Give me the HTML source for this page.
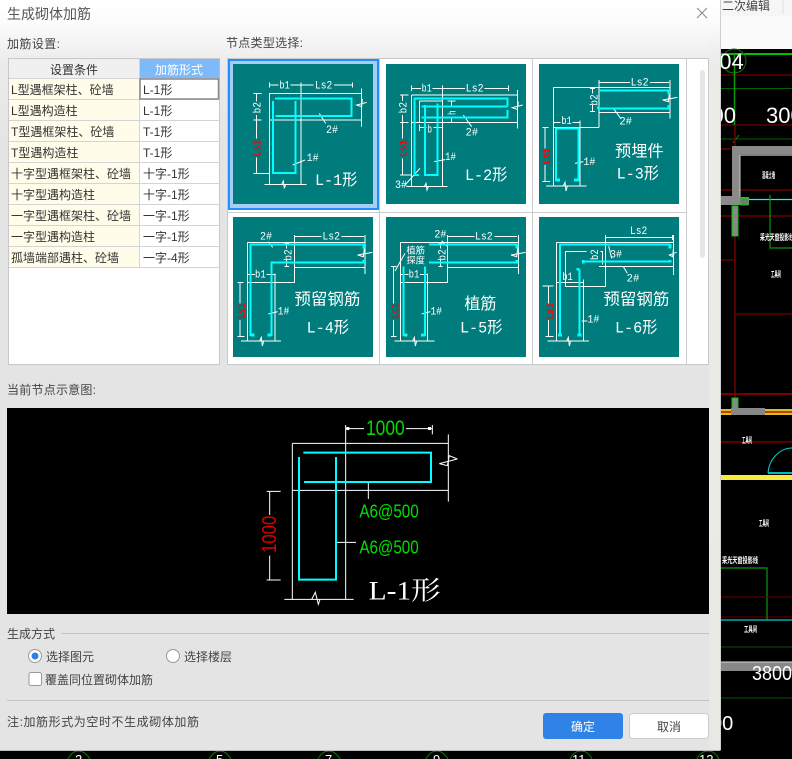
<!DOCTYPE html>
<html><head><meta charset="utf-8"><style>
html,body{margin:0;padding:0;background:#000;width:792px;height:759px;overflow:hidden}
svg{display:block}
text{font-family:"Liberation Sans","Noto Sans CJK SC",sans-serif}
.u{font-size:12px;fill:#444}
.t{font-size:12px;fill:#333}
.w{stroke:#fff;stroke-width:3;fill:none}
.c{stroke:#0ff;stroke-width:6;fill:none}
.l{font-size:33px;fill:#fff;font-family:"Liberation Mono","Noto Sans CJK SC",monospace}
.r{font-size:33px;fill:#f00;font-weight:bold;font-family:"Liberation Mono",monospace}
.b{font-size:48px;fill:#fff;font-family:"Liberation Mono","Noto Sans CJK SC",monospace}
.z{fill:#fff;font-family:"Liberation Serif","Noto Serif CJK SC",serif}
.cad{font-size:22px;fill:#fff}
.s{font-size:8px;fill:#fff;font-weight:bold}
</style></head><body>
<svg width="792" height="759" viewBox="0 0 792 759" xmlns="http://www.w3.org/2000/svg">
<defs>
<linearGradient id="dg" x1="0" y1="0" x2="0" y2="1"><stop offset="0" stop-color="#fff"/><stop offset=".03" stop-color="#fcfcfc"/><stop offset=".085" stop-color="#ebebeb"/><stop offset=".2" stop-color="#e4e4e4"/><stop offset="1" stop-color="#e3e4e3"/></linearGradient>
<linearGradient id="sg" x1="0" y1="0" x2="0" y2="1"><stop offset="0" stop-color="#ecece8" stop-opacity="0"/><stop offset=".1" stop-color="#ecece8"/><stop offset="1" stop-color="#e8e8e4"/></linearGradient>
</defs>
<rect width="792" height="759" fill="#000"/>
<!-- top app region -->
<rect x="720" y="0" width="72" height="49" fill="#fbfbfb"/>
<rect x="720" y="0" width="72" height="16" fill="#f6f6f6"/>
<text x="722" y="10" font-size="12" fill="#444">二次编辑</text>
<line x1="783" y1="0" x2="783" y2="14" stroke="#ddd"/>
<!-- CAD -->
<g fill="none">
<path d="M721 54H792" stroke="#0f0" stroke-width="1.4"/>
<path d="M721 75H792M721 125H792" stroke="#8b0000"/>
<path d="M721 88.500H792M721 139H792" stroke="#006400"/>
<circle cx="734" cy="61" r="12" stroke="#0a7a0a"/>
<path d="M734.500 54V125" stroke="#0a9a0a" stroke-width="1.500"/>
<path d="M733 143L739 135" stroke="#0a8a0a"/>
<path d="M735 125V146M735 205V400" stroke="#700000" stroke-width="1.500"/>
<path d="M721 149H731M721 190H792M721 216H792" stroke="#a00000"/>
<path d="M721 260H735M735 314H792" stroke="#8b0000"/>
<path d="M721 394H792" stroke="#a00000" stroke-width="1.500"/>
<path d="M740 199.500H792" stroke="#0ff" stroke-width="1.200"/>
<path d="M770 195V248H792" stroke="#0a9a0a" stroke-width="1.200"/>
<path d="M721 442H792" stroke="#b00000"/>
<path d="M768 473C769 459 780 448 792 448" stroke="#0cc"/>
<path d="M768 473H792" stroke="#0bb" stroke-width="2"/>
<path d="M721 568H767V620" stroke="#0a9a0a" stroke-width="1.200"/>
<path d="M721 597H792M721 617H792" stroke="#6b0000"/>
<path d="M721 620H792" stroke="#0ff"/>
<path d="M767 600V620" stroke="#0a9a0a"/>
<path d="M721 647H792M721 698H792" stroke="#085008"/>
</g>
<path d="M732 146H792V154H740V197H749V205H721V196H732Z" fill="#8a8a8a"/>
<path d="M740 155H792" stroke="#fff"/><path d="M740 197V155" stroke="#ccc"/>
<rect x="741" y="198" width="7" height="7" fill="#777" stroke="#0c0"/>
<rect x="732" y="206" width="6" height="30" fill="#888" stroke="#0c0"/>
<rect x="732" y="398" width="6" height="12" fill="#888" stroke="#0c0"/>
<rect x="721" y="409" width="71" height="6" fill="#d9c020"/><rect x="721" y="411" width="71" height="2" fill="#c04000"/>
<rect x="731" y="408" width="34" height="7" fill="#888"/>
<rect x="721" y="475" width="71" height="5" fill="#f5ea40"/>
<rect x="721" y="662" width="71" height="9" fill="#888"/>
<path d="M721 662H792" stroke="#ddd"/>
<text x="707" y="69" class="cad">004</text>
<text x="711.500" y="123" class="cad">00</text>
<text x="766" y="123" class="cad">300</text>
<text x="752" y="680" style="font-size:20px" class="cad" textLength="40" lengthAdjust="spacingAndGlyphs">3800</text>
<text x="711" y="730" style="font-size:20px" class="cad">00</text>
<text x="762" y="178" class="s" textLength="13" lengthAdjust="spacingAndGlyphs">混凝土墙</text>
<text x="760" y="240" class="s" textLength="34" lengthAdjust="spacingAndGlyphs">采光天窗投影线</text>
<text x="771" y="277" class="s" textLength="10" lengthAdjust="spacingAndGlyphs">工具间</text>
<text x="742" y="443" class="s" textLength="10" lengthAdjust="spacingAndGlyphs">工具间</text>
<text x="759" y="526" class="s" textLength="10" lengthAdjust="spacingAndGlyphs">工具间</text>
<text x="722" y="563" class="s" textLength="36" lengthAdjust="spacingAndGlyphs">采光天窗投影线</text>
<text x="744" y="632" class="s" textLength="13" lengthAdjust="spacingAndGlyphs">工具间</text>
<!-- bottom numbers -->
<g fill="none" stroke="#0a7a0a"><path d="M68 759Q72 751 78 751Q85 751 90 759M209 759Q214 751 220 751Q226 751 231 759M318 759Q322 751 329 751Q335 751 340 759M426 759Q430 751 437 751Q443 751 448 759M570 759Q574 751 581 751Q588 751 592 759M697 759Q701 751 708 751Q715 751 719 759"/></g>
<g font-size="13" fill="#fff"><text x="75" y="764">2</text><text x="216" y="764">5</text><text x="325" y="764">7</text><text x="433" y="764">9</text><text x="572" y="764">11</text><text x="699" y="764">12</text></g>
<!-- dialog -->
<rect x="0" y="0" width="720.500" height="750.500" fill="url(#dg)"/>
<rect x="709" y="30" width="11.500" height="720" fill="url(#sg)"/>
<path d="M0 750.500H720.500" fill="none" stroke="#bbb"/>
<path d="M720.500 0V750" fill="none" stroke="#d0d0d0"/>
<text x="7" y="19" font-size="14" fill="#555">生成砌体加筋</text>
<path d="M697 8L707 18M707 8L697 18" stroke="#888" fill="none"/>
<text x="7" y="48" class="u" textLength="53">加筋设置:</text>
<text x="226" y="47" class="u" textLength="77">节点类型选择:</text>
<!-- table -->
<rect x="8.500" y="58.500" width="211" height="306" fill="#fff" stroke="#c8c8c8"/>
<rect x="9" y="59" width="130" height="19.500" fill="#f0f0f0"/>
<rect x="139.500" y="59" width="80" height="19.500" fill="#7eb9fb"/>
<rect x="9" y="79" width="130" height="188" fill="#fffde9"/>
<g stroke="#d4d4d4"><path d="M9 78.500H219M9 99.500H219M9 120.500H219M9 141.500H219M9 162.500H219M9 183.500H219M9 204.500H219M9 225.500H219M9 246.500H219M9 267.500H219M139.500 59V267"/></g>
<rect x="140" y="79" width="78.500" height="20" fill="#fff" stroke="#888" stroke-width="1.500"/>
<text x="74" y="74" class="t" text-anchor="middle">设置条件</text>
<text x="179" y="74" font-size="12" fill="#fff" text-anchor="middle">加筋形式</text>
<text x="11" y="94" class="t">L型遇框架柱、砼墙</text><text x="143" y="94" class="t">L-1形</text>
<text x="11" y="115" class="t">L型遇构造柱</text><text x="143" y="115" class="t">L-1形</text>
<text x="11" y="136" class="t">T型遇框架柱、砼墙</text><text x="143" y="136" class="t">T-1形</text>
<text x="11" y="157" class="t">T型遇构造柱</text><text x="143" y="157" class="t">T-1形</text>
<text x="11" y="178" class="t">十字型遇框架柱、砼墙</text><text x="143" y="178" class="t">十字-1形</text>
<text x="11" y="199" class="t">十字型遇构造柱</text><text x="143" y="199" class="t">十字-1形</text>
<text x="11" y="220" class="t">一字型遇框架柱、砼墙</text><text x="143" y="220" class="t">一字-1形</text>
<text x="11" y="241" class="t">一字型遇构造柱</text><text x="143" y="241" class="t">一字-1形</text>
<text x="11" y="262" class="t">孤墙端部遇柱、砼墙</text><text x="143" y="262" class="t">一字-4形</text>
<!-- node panel -->
<rect x="227.500" y="58.500" width="481" height="306" fill="#fff" stroke="#c8c8c8"/>
<path d="M686.500 59V364" stroke="#ccc"/>
<rect x="700" y="70" width="5" height="188" rx="2.500" fill="#e6e6e6"/>
<path d="M379.500 59V364M532.500 59V364M228 212.500H686" stroke="#ccc"/>
<rect x="228" y="59" width="151" height="151" fill="#1e90ff"/>
<rect x="230" y="61" width="147" height="147" fill="#a8cdf5"/>
<rect x="233" y="64" width="140" height="140" fill="#007c7c"/>
<rect x="386" y="64" width="140" height="140" fill="#007c7c"/>
<rect x="539" y="64" width="140" height="140" fill="#007c7c"/>
<rect x="233" y="217" width="140" height="140" fill="#007c7c"/>
<rect x="386" y="217" width="140" height="140" fill="#007c7c"/>
<rect x="539" y="217" width="140" height="140" fill="#007c7c"/>
<!-- tile 1-2 -->
<g transform="translate(225,55) scale(.33333)" shape-rendering="crispEdges">
<path class="w" d="M133 82V98M133 90H160M197 90H266M327 90H383M383 82V98M228 82V98M133 115H410M133 115V388M228 98V388M133 195H410M410 100V215M118 388H245M85 115H110M85 195H110M95 115V140M95 180V250M95 308V355M85 355H133"/>
<path class="w" d="M425 142L395 150L410 155L412 132M170 388L175 378L178 400L182 388M283 175L302 205M203 330L240 315" shape-rendering="auto" stroke-width="2.500"/>
<path class="c" d="M144 138V354H212V138M150 131H379V183H152"/>
<text x="163" y="100" class="l" textLength="31" lengthAdjust="spacingAndGlyphs">b1</text>
<text x="270" y="100" class="l" textLength="52" lengthAdjust="spacingAndGlyphs">Ls2</text>
<text transform="translate(106,175) rotate(-90)" class="l" textLength="34" lengthAdjust="spacingAndGlyphs">b2</text>
<text transform="translate(106,305) rotate(-90)" class="r" textLength="52" lengthAdjust="spacingAndGlyphs">Ls1</text>
<text x="303" y="234" class="l" textLength="36" lengthAdjust="spacingAndGlyphs">2#</text>
<text x="245" y="318" class="l" textLength="36" lengthAdjust="spacingAndGlyphs">1#</text>
<text x="270" y="390" class="b" textLength="127" lengthAdjust="spacingAndGlyphs">L-1形</text>
<path class="w" d="M559 92V108M559 100H588M622 100H720M778 100H850M850 92V108M652 92V108M559 120H878M559 120V395M652 108V395M545 395H668M878 105V220M559 202H878M583 138H652M583 138V202M525 120H550M525 202H550M533 120V138M533 180V250M533 310V360M525 360H559M668 138H692M668 202H692M680 138V158M680 185V202M583 218H605M625 218H652M583 208V228"/>
<path class="w" d="M893 150L862 158L877 163L880 140M598 395L603 385L606 405L610 395M715 180L740 215M628 320L660 314M585 340L540 390" shape-rendering="auto" stroke-width="2.500"/>
<path class="c" d="M568 360V131H848V155"/>
<path class="c" d="M848 165V188H590M590 155H848M600 150V360H638V145"/>
<path d="M568 360H582" stroke="#0ff" stroke-width="5"/>
<text x="590" y="110" class="l" textLength="30" lengthAdjust="spacingAndGlyphs">b1</text>
<text x="722" y="110" class="l" textLength="54" lengthAdjust="spacingAndGlyphs">Ls2</text>
<text transform="translate(544,175) rotate(-90)" class="l" textLength="34" lengthAdjust="spacingAndGlyphs">b2</text>
<text transform="translate(544,306) rotate(-90)" class="r" textLength="52" lengthAdjust="spacingAndGlyphs">Ls1</text>
<text transform="translate(692,180) rotate(-90)" class="l" textLength="14" lengthAdjust="spacingAndGlyphs">h</text>
<text x="607" y="232" class="l" textLength="14" lengthAdjust="spacingAndGlyphs">b</text>
<text x="722" y="242" class="l" textLength="37" lengthAdjust="spacingAndGlyphs">2#</text>
<text x="660" y="315" class="l" textLength="33" lengthAdjust="spacingAndGlyphs">1#</text>
<text x="510" y="399" class="l" textLength="36" lengthAdjust="spacingAndGlyphs">3#</text>
<text x="720" y="375" class="b" textLength="127" lengthAdjust="spacingAndGlyphs">L-2形</text>
</g>
<!-- tile 3 and 6 -->
<g transform="translate(530,55) scale(.33333)" shape-rendering="crispEdges">
<path class="w" d="M207 75V90M207 82H300M360 82H417M420 75V190M70 97H420M70 97V393M70 217H207M207 75V217M207 172H420M150 197V393M180 100H195M180 170H195M188 100V115M188 150V170M70 203H92M128 203H150M38 217H55M45 217V280M45 330V380M38 380H60M48 393H170"/>
<path class="w" d="M442 127L398 135L415 140L418 115M100 393L105 382L108 408L112 393M250 160L272 190M135 325L160 320" shape-rendering="auto" stroke-width="2.500"/>
<path class="c" d="M78 378V220H146V378M207 107H416M207 160H416"/>
<path d="M78 375H90M146 375H132M416 104V118M416 163V150M205 154V162" stroke="#0ff" stroke-width="8" fill="none"/>
<text x="302" y="91" class="l" textLength="54" lengthAdjust="spacingAndGlyphs">Ls2</text>
<text x="94" y="207" class="l" textLength="31" lengthAdjust="spacingAndGlyphs">b1</text>
<text transform="translate(202,152) rotate(-90)" class="l" textLength="34" lengthAdjust="spacingAndGlyphs">b2</text>
<text transform="translate(60,327) rotate(-90)" class="r" textLength="48" lengthAdjust="spacingAndGlyphs">Ls1</text>
<text x="268" y="209" class="l" textLength="38" lengthAdjust="spacingAndGlyphs">2#</text>
<text x="160" y="330" class="l" textLength="36" lengthAdjust="spacingAndGlyphs">1#</text>
<text x="255" y="304" class="b" textLength="146" lengthAdjust="spacingAndGlyphs">预埋件</text>
<text x="260" y="371" class="b" textLength="127" lengthAdjust="spacingAndGlyphs">L-3形</text>
</g>
<g transform="translate(530,210) scale(.33333)" shape-rendering="crispEdges">
<path class="w" d="M227 75V230M227 82H427M427 75V90M80 97H430M80 97V393M80 217H160M430 75V195M107 124H170M107 124V230H227M207 170H430M160 208V393M212 124H218V163M38 228H70M55 228V280M55 330V380M46 380H70M53 393H177"/>
<path class="w" d="M440 127L418 135L428 140L430 118M110 393L115 382L118 408L122 393M236 108L245 145M280 170L292 190M155 333H172" shape-rendering="auto" stroke-width="2.500"/>
<path class="c" d="M90 378V104H420M160 155H420M148 178V378"/>
<path d="M84 375H96M154 375H142M420 102V116M420 158V150M148 178H140M160 150V161" stroke="#0ff" stroke-width="8" fill="none"/>
<text x="300" y="72" class="l" textLength="52" lengthAdjust="spacingAndGlyphs">Ls2</text>
<text x="97" y="210" class="l" textLength="31" lengthAdjust="spacingAndGlyphs">b1</text>
<text transform="translate(204,150) rotate(-90)" class="l" textLength="32" lengthAdjust="spacingAndGlyphs">b2</text>
<text transform="translate(71,328) rotate(-90)" class="r" textLength="50" lengthAdjust="spacingAndGlyphs">Ls1</text>
<text x="240" y="142" class="l" textLength="36" lengthAdjust="spacingAndGlyphs">3#</text>
<text x="290" y="215" class="l" textLength="38" lengthAdjust="spacingAndGlyphs">2#</text>
<text x="172" y="337" class="l" textLength="36" lengthAdjust="spacingAndGlyphs">1#</text>
<text x="220" y="284" class="b" textLength="198" lengthAdjust="spacingAndGlyphs">预留钢筋</text>
<text x="255" y="368" class="b" textLength="127" lengthAdjust="spacingAndGlyphs">L-6形</text>
</g>
<!-- tile 4-5 -->
<g transform="translate(225,210) scale(.33333)" shape-rendering="crispEdges">
<path class="w" d="M208 75V90M208 80H290M350 80H417M420 75V192M67 97H420M67 97V393M67 217H208M208 75V217M208 172H420M150 190V393M67 193H90M125 193H150M178 100H192M178 170H192M185 100V115M185 150V170M38 217H55M45 217V280M45 330V380M38 380H58M48 393H168"/>
<path class="w" d="M442 127L398 135L415 140L418 115M104 393L109 382L112 408L116 393M130 95L143 112M130 312L158 305" shape-rendering="auto" stroke-width="2.500"/>
<path class="c" d="M76 378V104H416M140 378V158H416"/>
<path d="M76 375H88M140 375H128M416 102V116M416 160V150" stroke="#0ff" stroke-width="8" fill="none"/>
<text x="105" y="89" class="l" textLength="36" lengthAdjust="spacingAndGlyphs">2#</text>
<text x="292" y="89" class="l" textLength="53" lengthAdjust="spacingAndGlyphs">Ls2</text>
<text x="90" y="203" class="l" textLength="32" lengthAdjust="spacingAndGlyphs">b1</text>
<text transform="translate(200,152) rotate(-90)" class="l" textLength="34" lengthAdjust="spacingAndGlyphs">b2</text>
<text transform="translate(60,327) rotate(-90)" class="r" textLength="48" lengthAdjust="spacingAndGlyphs">Ls1</text>
<text x="158" y="314" class="l" textLength="35" lengthAdjust="spacingAndGlyphs">1#</text>
<text x="208" y="284" class="b" textLength="198" lengthAdjust="spacingAndGlyphs">预留钢筋</text>
<text x="245" y="367" class="b" textLength="127" lengthAdjust="spacingAndGlyphs">L-4形</text>
<path class="w" d="M668 75V90M668 80H748M808 80H876M880 75V192M526 97H880M526 97V393M526 217H668M668 75V217M668 172H880M608 190V393M526 193H550M585 193H608M640 100H652M640 170H652M646 100V115M646 150V170M498 170H514M506 170V280M506 330V380M498 380H515M508 393H628"/>
<path class="w" d="M902 127L858 135L875 140L878 115M563 393L568 382L571 408L575 393M650 92L665 108M510 183L540 130M590 312L616 305" shape-rendering="auto" stroke-width="2.500"/>
<path class="c" d="M535 170V378M600 170V378M612 104H876M612 158H876"/>
<path d="M535 375H547M600 375H588M876 102V116M876 160V150" stroke="#0ff" stroke-width="8" fill="none"/>
<text x="628" y="83" class="l" textLength="36" lengthAdjust="spacingAndGlyphs">2#</text>
<text x="750" y="89" class="l" textLength="53" lengthAdjust="spacingAndGlyphs">Ls2</text>
<text x="551" y="203" class="l" textLength="32" lengthAdjust="spacingAndGlyphs">b1</text>
<text transform="translate(661,152) rotate(-90)" class="l" textLength="34" lengthAdjust="spacingAndGlyphs">b2</text>
<text transform="translate(520,327) rotate(-90)" class="r" textLength="48" lengthAdjust="spacingAndGlyphs">Ls1</text>
<text x="616" y="314" class="l" textLength="35" lengthAdjust="spacingAndGlyphs">1#</text>
<text x="544" y="130" style="font-size:27px" class="l" textLength="56" lengthAdjust="spacingAndGlyphs">植筋</text>
<text x="544" y="160" style="font-size:27px" class="l" textLength="56" lengthAdjust="spacingAndGlyphs">探度</text>
<text x="718" y="297" class="b" textLength="96" lengthAdjust="spacingAndGlyphs">植筋</text>
<text x="705" y="367" class="b" textLength="127" lengthAdjust="spacingAndGlyphs">L-5形</text>
</g>
<!-- preview -->
<text x="7" y="394" class="u" textLength="89">当前节点示意图:</text>
<rect x="7" y="408" width="702" height="206" fill="#000"/>
<g transform="translate(240,405) scale(.33333)" fill="none">
<path class="w" d="M157 115H625M157 115V583M317 60V583M157 256H625M625 88V290M133 583H341M317 71H372M498 71H577M577 60V88M80 259H122M80 525H122M89 259V330M89 452V525M385 232V282M290 412H348"/>
<path class="w" d="M652 162L598 176L622 182L628 152L652 162M215 583L226 562L235 598L240 583" stroke-width="2.500"/>
<path d="M190 143H573V231H192M177 156V524H288V156" stroke="#0ff" stroke-width="6"/>
<rect x="319" y="66" width="9" height="9" fill="#fff"/><rect x="564" y="66" width="9" height="9" fill="#fff"/>
<text x="378" y="90" font-size="63" fill="#0d0" textLength="116" lengthAdjust="spacingAndGlyphs">1000</text>
<text transform="translate(108,444) rotate(-90)" font-size="60" fill="#d00" textLength="112" lengthAdjust="spacingAndGlyphs">1000</text>
<text x="358" y="338" font-size="56" fill="#0d0" textLength="178" lengthAdjust="spacingAndGlyphs">A6@500</text>
<text x="358" y="445" font-size="56" fill="#0d0" textLength="178" lengthAdjust="spacingAndGlyphs">A6@500</text>
<text x="386" y="583" class="z" font-size="78" textLength="216" lengthAdjust="spacingAndGlyphs">L-1形</text>
</g>
<!-- bottom form -->
<text x="7" y="638" class="u">生成方式</text>
<path d="M61 633.500H709M7 700.500H709" stroke="#c4c4c4"/>
<circle cx="35" cy="656" r="6.500" fill="#fff" stroke="#999"/><circle cx="35" cy="656" r="3.500" fill="#2f7fe0"/>
<text x="46" y="661" class="u">选择图元</text>
<circle cx="173" cy="656" r="6.500" fill="#fff" stroke="#999"/>
<text x="184" y="661" class="u">选择楼层</text>
<rect x="29" y="672.500" width="12.500" height="13" rx="2" fill="#fff" stroke="#999"/>
<text x="45" y="684" class="u">覆盖同位置砌体加筋</text>
<text x="7" y="726" class="u" textLength="192">注:加筋形式为空时不生成砌体加筋</text>
<rect x="543" y="713" width="80" height="26" rx="3" fill="#2f83e6"/>
<text x="583" y="731" font-size="12" fill="#fff" text-anchor="middle">确定</text>
<rect x="629.500" y="713.500" width="79" height="25" rx="3" fill="#fff" stroke="#ccc"/>
<text x="669" y="731" font-size="12" fill="#444" text-anchor="middle">取消</text>
</svg>
</body></html>
